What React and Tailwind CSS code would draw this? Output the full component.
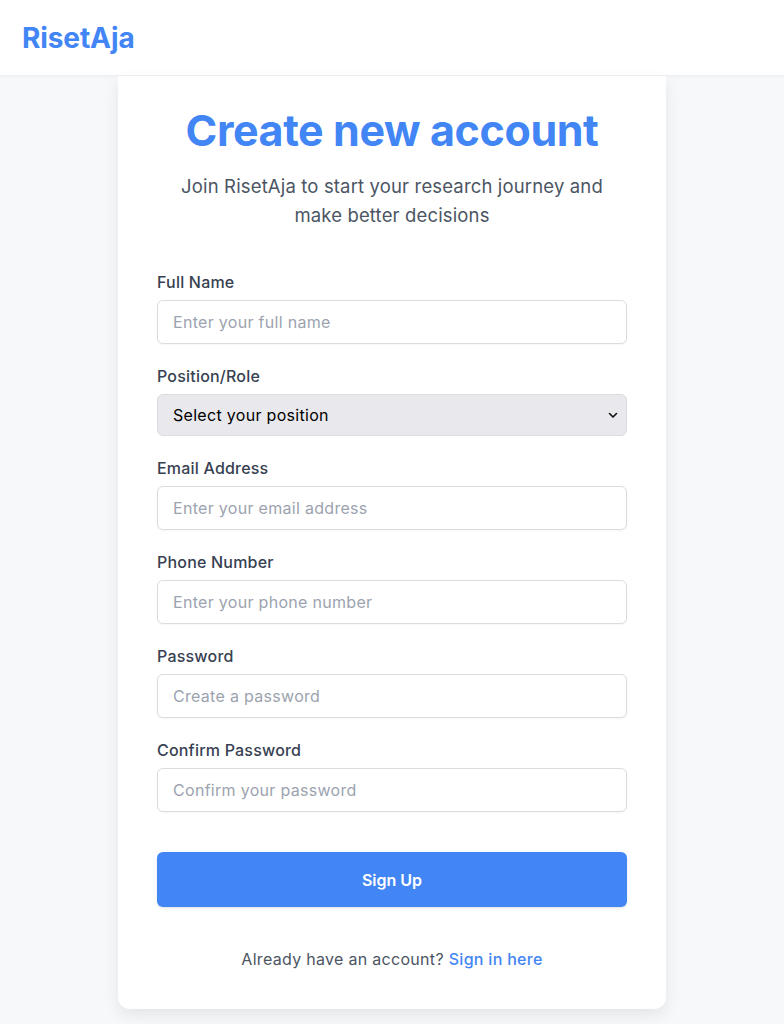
import React, { useState } from "react";

const fields = [
  { label: "Full Name", type: "text", placeholder: "Enter your full name" },
  { label: "Email Address", type: "email", placeholder: "Enter your email address" },
  { label: "Phone Number", type: "tel", placeholder: "Enter your phone number" },
  { label: "Password", type: "password", placeholder: "Create a password" },
  { label: "Confirm Password", type: "password", placeholder: "Confirm your password" },
];

function Field({ label, type, placeholder }) {
  const [value, setValue] = useState("");
  return (
    <div className="flex flex-col">
      <label className="mb-1.5 text-base leading-6 font-medium text-[#374151] tracking-[0.2px]">{label}</label>
      <input
        type={type}
        placeholder={placeholder}
        value={value}
        onChange={(e) => setValue(e.target.value)}
        className="h-[44px] px-[15px] rounded-md border border-[#d9dce1] bg-white text-base tracking-[0.3px] text-[#111827] placeholder:text-[#9ca3af] outline-none shadow-[0_1px_2px_rgba(0,0,0,0.04)]"
      />
    </div>
  );
}

export default function App() {
  const [position, setPosition] = useState("");

  return (
    <div className="min-h-screen bg-[#f7f8fa] font-['Inter',sans-serif]">
      <header className="h-[76px] bg-white flex items-center px-[22px] border-b border-[#eef0f3] shadow-[0_1px_3px_rgba(0,0,0,0.03)]">
        <span className="text-[28px] font-bold text-[#4285f4] tracking-[-0.1px]">RisetAja</span>
      </header>

      <div className="mx-auto w-[548px] bg-white rounded-b-xl shadow-[0_6px_16px_rgba(0,0,0,0.08)] px-[39px] pt-[30px] pb-[38px]">
        <h1 className="text-center text-[43px] leading-[48px] font-bold text-[#4285f4] tracking-[-0.4px]">
          Create new account
        </h1>
        <p className="mt-[18px] text-center text-[18.5px] leading-[29px] text-[#4b5563] tracking-[0.15px] px-4">
          Join RisetAja to start your research journey and make better decisions
        </p>

        <form className="mt-10 flex flex-col gap-5" onSubmit={(e) => e.preventDefault()}>
          <Field {...fields[0]} />

          <div className="flex flex-col">
            <label className="mb-1.5 text-base leading-6 font-medium text-[#374151] tracking-[0.2px]">Position/Role</label>
            <div className="relative">
              <select
                value={position}
                onChange={(e) => setPosition(e.target.value)}
                className="w-full h-[42px] appearance-none rounded-md border border-[#d9dce1] bg-[#e9e9ed] px-[15px] text-base tracking-[0.3px] text-black outline-none"
              >
                <option value="">Select your position</option>
                <option value="student">Student</option>
                <option value="researcher">Researcher</option>
                <option value="lecturer">Lecturer</option>
              </select>
              <svg
                className="pointer-events-none absolute right-[9px] top-1/2 -translate-y-1/2"
                width="10"
                height="10"
                viewBox="0 0 10 10"
                fill="none"
              >
                <path d="M1.5 3.5 5 7l3.5-3.5" stroke="#111" strokeWidth="1.6" strokeLinecap="round" strokeLinejoin="round" />
              </svg>
            </div>
          </div>

          {fields.slice(1).map((f) => (
            <Field key={f.label} {...f} />
          ))}

          <button
            type="submit"
            className="mt-5 h-[55px] w-full rounded-md bg-[#4285f4] text-base font-semibold text-white shadow-sm"
          >
            Sign Up
          </button>
        </form>

        <p className="mt-10 text-center text-base leading-6 text-[#4b5563] tracking-[0.3px]">
          Already have an account?{" "}
          <a href="#" className="font-medium text-[#4285f4]">
            Sign in here
          </a>
        </p>
      </div>
    </div>
  );
}
